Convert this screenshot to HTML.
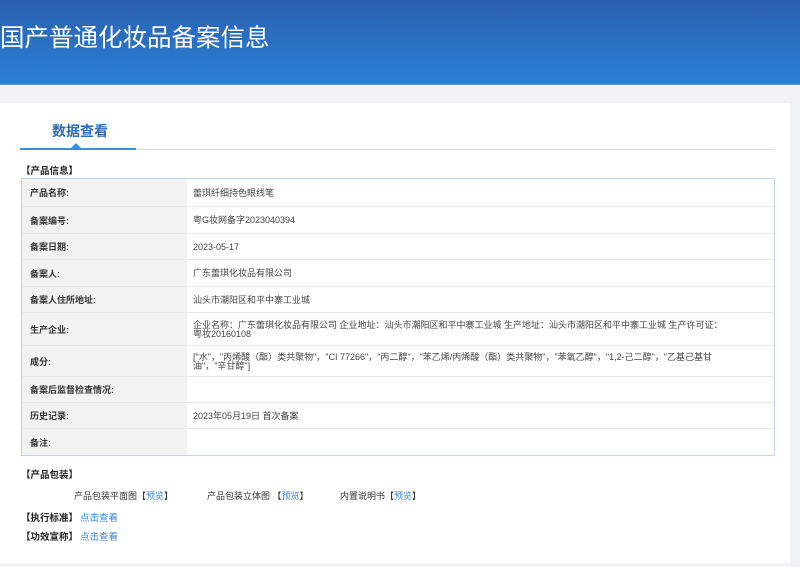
<!DOCTYPE html>
<html><head><meta charset="utf-8"><style>
*{margin:0;padding:0;box-sizing:border-box}
body{width:800px;height:567px;overflow:hidden;background:#f0f3f6;font-family:"Liberation Sans","Noto Sans CJK SC",sans-serif;color:#333;position:relative}
.hd{position:absolute;left:0;top:0;width:800px;height:85px;background:linear-gradient(180deg,#2b5fae 0%,#2a73c6 60%,#2b80d4 100%);border-bottom:1px solid #5a9be0}
.hd h1{position:absolute;left:0;top:24px;font-size:24.5px;font-weight:normal;color:#fff;line-height:30px}
.main{position:absolute;left:0;top:103px;width:790px;height:460px;background:#fff}
.tab{position:absolute;left:52px;top:121px;font-size:14px;font-weight:bold;color:#2d6bb3}
.tl{position:absolute;left:20px;top:149px;width:755px;height:1px;background:#ddd}
.tb{position:absolute;left:20px;top:148px;width:116px;height:2px;background:#3a8ee0}
.tri{position:absolute;left:71px;top:143px;width:0;height:0;border-left:5px solid transparent;border-right:5px solid transparent;border-bottom:5px solid #3a8ee0}
.sec{position:absolute;left:21px;font-size:9.5px;line-height:12px;font-weight:bold;color:#222}
.tbl{position:absolute;left:21px;top:178px;width:754px;height:278px;border:1px solid #bcd3ee;background:#fff}
.r{position:absolute;left:0;width:752px;border-bottom:1px solid #e8e8e8;font-size:9px}
.r .l{position:absolute;left:0;top:0;bottom:0;width:165px;background:#f2f2f2;font-weight:bold;color:#333;padding-left:8px;display:flex;align-items:center}
.r .v{position:absolute;left:171px;top:1px;bottom:0;width:535px;color:#444;display:flex;align-items:center;line-height:9px}
.pk{position:absolute;top:489px;font-size:9px;color:#333}
a{color:#3a86d6;text-decoration:none}
.lk{position:absolute;font-size:9.5px;line-height:12px}
</style></head><body>
<div class="hd"><h1>国产普通化妆品备案信息</h1></div>
<div class="main"></div>
<div class="tab">数据查看</div>
<div class="tl"></div><div class="tb"></div><div class="tri"></div>
<div class="sec" style="top:166px">【产品信息】</div>
<div class="tbl">
<div class="r" style="top:0;height:28px"><div class="l">产品名称:</div><div class="v">蕾琪纤细持色眼线笔</div></div>
<div class="r" style="top:28px;height:27px"><div class="l">备案编号:</div><div class="v">粤G妆网备字2023040394</div></div>
<div class="r" style="top:55px;height:26px"><div class="l">备案日期:</div><div class="v">2023-05-17</div></div>
<div class="r" style="top:81px;height:27px"><div class="l">备案人:</div><div class="v">广东蕾琪化妆品有限公司</div></div>
<div class="r" style="top:108px;height:26px"><div class="l">备案人住所地址:</div><div class="v">汕头市潮阳区和平中寨工业城</div></div>
<div class="r" style="top:134px;height:33px"><div class="l">生产企业:</div><div class="v">企业名称：广东蕾琪化妆品有限公司 企业地址：汕头市潮阳区和平中寨工业城 生产地址：汕头市潮阳区和平中寨工业城 生产许可证：粤妆20160108</div></div>
<div class="r" style="top:167px;height:31px"><div class="l">成分:</div><div class="v">["水"，"丙烯酸（酯）类共聚物"，"CI 77266"，"丙二醇"，"苯乙烯/丙烯酸（酯）类共聚物"，"苯氧乙醇"，"1,2-己二醇"，"乙基己基甘油"，"辛甘醇"]</div></div>
<div class="r" style="top:198px;height:26px"><div class="l">备案后监督检查情况:</div><div class="v"></div></div>
<div class="r" style="top:224px;height:26px"><div class="l">历史记录:</div><div class="v">2023年05月19日 首次备案</div></div>
<div class="r" style="top:250px;height:26px;border-bottom:none"><div class="l">备注:</div><div class="v"></div></div>
</div>
<div class="sec" style="top:470px">【产品包装】</div>
<div class="pk" style="left:74px">产品包装平面图【<a>预览</a>】</div>
<div class="pk" style="left:207px">产品包装立体图 【<a>预览</a>】</div>
<div class="pk" style="left:340px">内置说明书【<a>预览</a>】</div>
<div class="sec" style="top:513px">【执行标准】</div><div class="lk" style="left:80px;top:513px"><a>点击查看</a></div>
<div class="sec" style="top:532px">【功效宣称】</div><div class="lk" style="left:80px;top:532px"><a>点击查看</a></div>
</body></html>
